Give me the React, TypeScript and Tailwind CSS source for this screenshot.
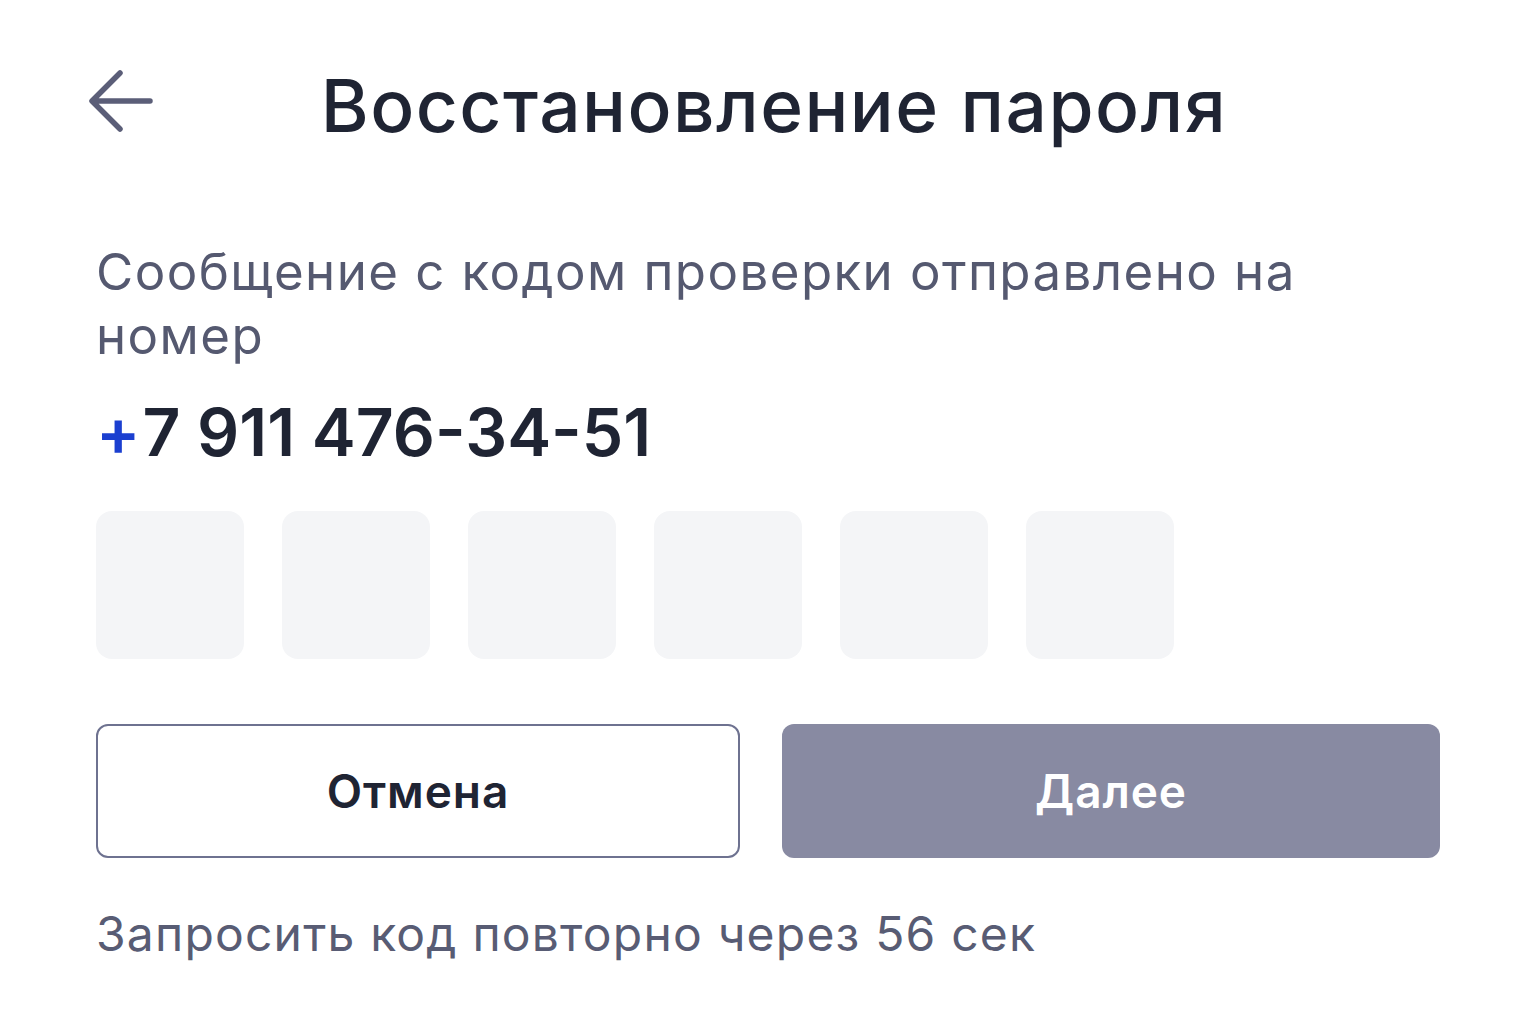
import React from "react";

const font = { fontFamily: "Inter, 'Noto Sans', sans-serif" };

function BackArrow() {
  return (
    <svg width="66" height="62" viewBox="0 0 66 62" fill="none" className="text-[#5b5e78]">
      <path
        d="M62 31H6M32 3L4 31l28 28"
        stroke="currentColor"
        strokeWidth="5.5"
        strokeLinecap="round"
        strokeLinejoin="round"
      />
    </svg>
  );
}

export default function App() {
  const cells = [0, 1, 2, 3, 4, 5];

  return (
    <div className="w-[1536px] h-[1024px] bg-white overflow-hidden" style={font}>
      <div className="relative flex items-center justify-center h-[62px] mt-[70px]">
        <button className="absolute left-[88px] top-0">
          <BackArrow />
        </button>
        <h1 className="text-[73px] leading-none font-medium text-[#1f2433] tracking-[0.02em] ml-[12px] mt-[8px]">
          Восстановление пароля
        </h1>
      </div>

      <div className="px-[96px] pt-[108px]">
        <p className="text-[51px] leading-[64px] text-[#555970] tracking-[0.028em] max-w-[1300px]">
          Сообщение с кодом проверки отправлено на номер
        </p>

        <div className="mt-[31px] text-[66px] leading-none font-semibold text-[#1f2433]">
          <span className="text-[#1b3fd0] mr-[2px]">+</span>7 911 476-34-51
        </div>

        <div className="flex gap-[38px] mt-[46px]">
          {cells.map((c) => (
            <div key={c} className="w-[148px] h-[148px] rounded-[16px] bg-[#f4f5f7]" />
          ))}
        </div>

        <div className="flex gap-[42px] mt-[65px]">
          <button className="w-[644px] h-[134px] rounded-[12px] border-2 border-[#6e7290] bg-white text-[46px] font-semibold text-[#1f2433] tracking-[0.02em]">
            Отмена
          </button>
          <button className="w-[658px] h-[134px] rounded-[12px] bg-[#888aa2] text-[46px] font-semibold text-white tracking-[0.02em]">
            Далее
          </button>
        </div>

        <p className="mt-[52px] text-[48px] leading-none text-[#585c74] tracking-[0.025em]">
          Запросить код повторно через 56 сек
        </p>
      </div>
    </div>
  );
}
